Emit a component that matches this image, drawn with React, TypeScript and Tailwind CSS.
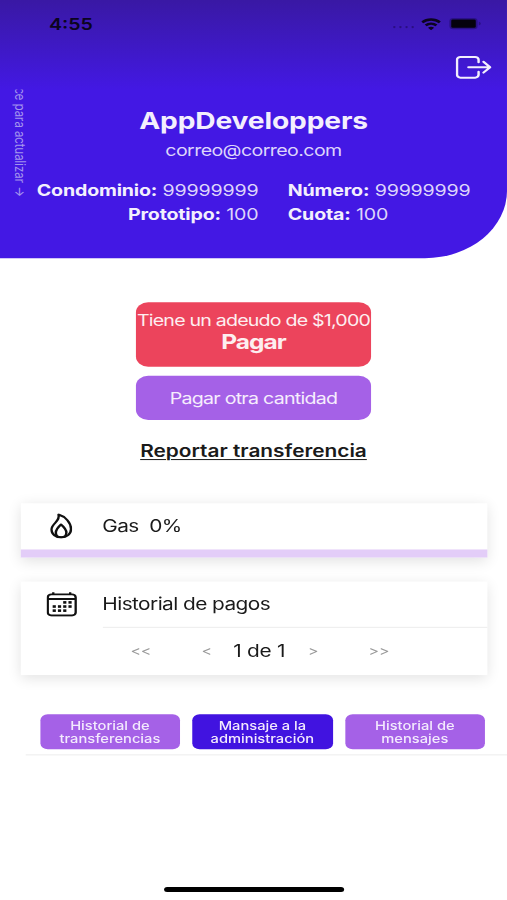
import React from "react";

interface Action {
  label: string;
  primary: boolean;
}

const actions: Action[] = [
  { label: "Historial de transferencias", primary: false },
  { label: "Mansaje a la administración", primary: true },
  { label: "Historial de mensajes", primary: false },
];

const calendarDots = [
  [14.1, 10.7], [18.4, 10.7],
  [5.5, 14.8], [9.8, 14.8], [14.1, 14.8], [18.4, 14.8],
  [5.5, 18.9], [9.8, 18.9], [14.1, 18.9],
];

function StatusBar() {
  return (
    <div className="flex h-[47px] items-center justify-between pl-[40px] pr-[21px] text-[#0b0420]">
      <span className="text-[16px] font-semibold leading-none">4:55</span>
      <div className="flex items-center gap-[6px]">
        <div className="mt-[7px] flex gap-[3px]">
          {[0, 1, 2, 3].map((i) => (
            <span key={i} className="h-[2px] w-[2px] rounded-full bg-[#2a0f80]" />
          ))}
        </div>
        <svg width="16" height="12" viewBox="0 0 16 12" fill="none" stroke="currentColor" strokeWidth="2.4">
          <path d="M.8 4.2C4.8 .4 11.2 .4 15.2 4.2" />
          <path d="M3.6 7.3c2.6-2.4 6.2-2.4 8.8 0" />
          <path d="M8 12.2L5.5 9.7c1.4-1.3 3.6-1.3 5 0z" fill="currentColor" stroke="none" />
        </svg>
        <svg width="27" height="13" viewBox="0 0 27 13">
          <rect x="1" y="1" width="23" height="11" rx="3.2" fill="#2a1186" />
          <rect x="2.5" y="2.4" width="20" height="8.2" rx="1.2" fill="#05020c" />
          <path d="M25 4.6v3.8c1-.4 1.6-1 1.6-1.9S26 5 25 4.6z" fill="#2a1186" />
        </svg>
      </div>
    </div>
  );
}

function Header() {
  return (
    <header className="relative h-[256.5px] rounded-br-[67px] bg-gradient-to-b from-[#3918a4] to-[#4318e4] to-35% text-[#f3effd]">
      <StatusBar />
      <button className="absolute left-[371.7px] top-[55px]">
        <svg width="30" height="24" viewBox="0 0 30 24" fill="none" stroke="currentColor" strokeWidth="2" strokeLinecap="round" strokeLinejoin="round">
          <path d="M18.8 7V4.5a2.8 2.8 0 0 0-2.8-2.8H4a2.8 2.8 0 0 0-2.8 2.8v15A2.8 2.8 0 0 0 4 22.3h12a2.8 2.8 0 0 0 2.8-2.8V16.5" />
          <path d="M10.5 11.9H28M22.8 6.5l5.4 5.4-5.4 5.4" />
        </svg>
      </button>
      <div className="absolute left-[9px] top-[89px] flex h-[107px] w-[14px] flex-col justify-end overflow-hidden">
        <span className="whitespace-nowrap text-[11.3px] leading-[14px] text-[#a395ee] [writing-mode:vertical-rl]">ce para actualizar →</span>
      </div>
      <div className="flex flex-col items-center pt-[58.5px]">
        <h1 className="text-[23px] font-bold leading-[28px] tracking-[-0.12px]">AppDeveloppers</h1>
        <p className="mt-[5px] text-[16px] leading-[20px] tracking-[-0.48px] text-[#ddd5fb]">correo@correo.com</p>
      </div>
      <div className="mt-[18.5px] grid grid-cols-[211px_1fr] gap-x-[24px] whitespace-nowrap text-[16px] leading-[24px] tracking-[-0.14px] text-[#ddd5fb]">
        <p className="text-right"><b className="text-[#f3effd]">Condominio:</b> 99999999</p>
        <p><b className="text-[#f3effd]">Número:</b> 99999999</p>
        <p className="text-right"><b className="text-[#f3effd]">Prototipo:</b> 100</p>
        <p><b className="text-[#f3effd]">Cuota:</b> 100</p>
      </div>
    </header>
  );
}

function FlameIcon() {
  return (
    <svg className="-mt-px" width="18" height="25" viewBox="0 0 18 25" fill="none" stroke="#111" strokeWidth="2" strokeLinejoin="round">
      <path d="M6.8 1.2c.8 3.3-.6 5.6-2.6 8.2C2.4 11.7 1 13.5 1 16.2 1 20.7 4.5 24 9 24s8-3.3 8-8.3C17 9.5 12.5 3.2 6.800 1.2z" />
      <path d="M8.8 11.2c-2 2.2-4.2 5-4.2 8.2 0 3 2 4.5 4.3 4.5s4.3-1.5 4.3-4.5c0-3.2-2.2-6-4.4-8.2z" />
    </svg>
  );
}

function CalendarIcon() {
  return (
    <svg width="25" height="25" viewBox="0 0 25 25" fill="none" stroke="#111" strokeWidth="1.9">
      <rect x="1" y="2.7" width="22.8" height="21" rx="3" />
      <path d="M1 7.3h23M5.5 .5v2.5M19.3 .5v2.5" />
      {calendarDots.map(([x, y]) => (
        <rect key={`${x}-${y}`} x={x - 0.5} y={y - 1.3} width="2.6" height="2.6" fill="#111" stroke="none" />
      ))}
    </svg>
  );
}

export default function App() {
  return (
    <div className="h-[900px] w-[507px] overflow-hidden bg-white">
      {/* 414x896 device screen, fitted to the frame */}
      <div className="flex h-[896px] w-[414px] origin-top-left scale-x-[1.2246] scale-y-[1.0045] flex-col bg-white font-['Inter',sans-serif] text-[#1a1a1a]">
        <Header />

        <main className="flex flex-col">
          <div className="mx-auto mt-[44px] flex w-[192px] flex-col items-center">
            <button className="flex h-[64px] w-full flex-col items-center justify-center whitespace-nowrap rounded-[10px] bg-[#ec445c] pb-[4px] text-[#fdeef0]">
              <span className="text-[16px] leading-[20px] tracking-[-0.65px]">Tiene un adeudo de $1,000</span>
              <span className="text-[20px] font-bold leading-[23px] tracking-[-0.8px]">Pagar</span>
            </button>
            <button className="mt-[9.5px] h-[44px] w-full rounded-[10px] bg-[#a561e7] text-[16px] tracking-[-0.6px] text-[#f6edfd]">
              Pagar otra cantidad
            </button>
            <a className="mt-[20px] whitespace-nowrap text-[17px] font-semibold leading-[22px] underline decoration-1 underline-offset-2">
              Reportar transferencia
            </a>
          </div>

          <section className="ml-[16.5px] mt-[41px] w-[381.5px] bg-white shadow-[0_3px_12px_rgba(0,0,0,0.12)]">
            <div className="flex h-[46px] items-center">
              <div className="flex w-[67px] justify-center"><FlameIcon /></div>
              <span className="mt-px whitespace-pre text-[17px] tracking-[-0.48px]">Gas  0%</span>
            </div>
            <div className="h-[8px] bg-[#e3cdf8]" />
          </section>

          <section className="ml-[16.5px] mt-[24px] w-[381.5px] bg-white shadow-[0_3px_12px_rgba(0,0,0,0.12)]">
            <div className="flex h-[46px]">
              <div className="-mt-[2px] flex w-[67px] items-center justify-center"><CalendarIcon /></div>
              <div className="flex flex-1 items-center border-b border-[#ececec] text-[17px] tracking-[-0.46px]">Historial de pagos</div>
            </div>
            <div className="flex h-[47px] items-center whitespace-nowrap pl-[90px] text-[13px] tracking-[-0.2px] text-[#999]">
              <span className="w-[58px]">&lt;&lt;</span>
              <span className="w-[26px]">&lt;</span>
              <span className="w-[61px] text-[17px] text-[#1a1a1a]">1 de 1</span>
              <span className="w-[49.5px]">&gt;</span>
              <span>&gt;&gt;</span>
            </div>
          </section>

          <div className="mt-[39px] flex gap-[10px] pl-[32.5px]">
            {actions.map((action) => (
              <button
                key={action.label}
                className={`flex h-[35px] w-[114.5px] items-center justify-center rounded-[6px] px-[10px] text-center text-[12px] font-medium leading-[13px] text-[#f3eafd] ${
                  action.primary ? "bg-[#4113e0]" : "bg-[#a561e7]"
                }`}
              >
                {action.label}
              </button>
            ))}
          </div>
          <div className="ml-[21px] mt-[5px] h-px bg-[#ececec]" />
        </main>

        <div className="mx-auto mb-[8px] mt-auto h-[5px] w-[147px] rounded-full bg-black" />
      </div>
    </div>
  );
}
